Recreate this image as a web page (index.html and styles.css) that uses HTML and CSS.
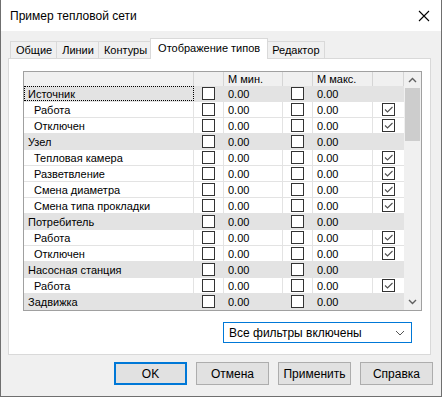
FILE: index.html
```html
<!doctype html>
<html lang="ru">
    <head>
        <meta charset="utf8">
        <link rel="stylesheet" href="styles.css">
    </head>
    <body>
        <div class="window">
            <header class="titlebar">
                <span class="title">Пример тепловой сети</span>
                <svg class="close" width="12" height="12" viewBox="0 0 12 12">
                    <path d="M1 1 L11 11 M11 1 L1 11" stroke="#000" stroke-width="1.1" fill="none"/>
                </svg>
            </header>
            <div class="content">
                <ul class="tabs">
                    <li class="tab">Общие</li>
                    <li class="tab">Линии</li>
                    <li class="tab">Контуры</li>
                    <li class="tab active">Отображение типов</li>
                    <li class="tab">Редактор</li>
                </ul>
                <section class="panel">
                    <div class="grid">
                        <div class="table">
                            <div class="row head">
                                <div class="cell"></div>
                                <div class="cell"></div>
                                <div class="cell num">М мин.</div>
                                <div class="cell"></div>
                                <div class="cell num">М макс.</div>
                                <div class="cell"></div>
                            </div>
                            <div class="row group">
                                <div class="cell name focus">Источник</div>
                                <div class="cell box"><span class="check"></span></div>
                                <div class="cell num">0.00</div>
                                <div class="cell box"><span class="check"></span></div>
                                <div class="cell num">0.00</div>
                                <div class="cell box"></div>
                            </div>
                            <div class="row">
                                <div class="cell name">Работа</div>
                                <div class="cell box"><span class="check"></span></div>
                                <div class="cell num">0.00</div>
                                <div class="cell box"><span class="check"></span></div>
                                <div class="cell num">0.00</div>
                                <div class="cell box"><span class="check on"></span></div>
                            </div>
                            <div class="row">
                                <div class="cell name">Отключен</div>
                                <div class="cell box"><span class="check"></span></div>
                                <div class="cell num">0.00</div>
                                <div class="cell box"><span class="check"></span></div>
                                <div class="cell num">0.00</div>
                                <div class="cell box"><span class="check on"></span></div>
                            </div>
                            <div class="row group">
                                <div class="cell name">Узел</div>
                                <div class="cell box"><span class="check"></span></div>
                                <div class="cell num">0.00</div>
                                <div class="cell box"><span class="check"></span></div>
                                <div class="cell num">0.00</div>
                                <div class="cell box"></div>
                            </div>
                            <div class="row">
                                <div class="cell name">Тепловая камера</div>
                                <div class="cell box"><span class="check"></span></div>
                                <div class="cell num">0.00</div>
                                <div class="cell box"><span class="check"></span></div>
                                <div class="cell num">0.00</div>
                                <div class="cell box"><span class="check on"></span></div>
                            </div>
                            <div class="row">
                                <div class="cell name">Разветвление</div>
                                <div class="cell box"><span class="check"></span></div>
                                <div class="cell num">0.00</div>
                                <div class="cell box"><span class="check"></span></div>
                                <div class="cell num">0.00</div>
                                <div class="cell box"><span class="check on"></span></div>
                            </div>
                            <div class="row">
                                <div class="cell name">Смена диаметра</div>
                                <div class="cell box"><span class="check"></span></div>
                                <div class="cell num">0.00</div>
                                <div class="cell box"><span class="check"></span></div>
                                <div class="cell num">0.00</div>
                                <div class="cell box"><span class="check on"></span></div>
                            </div>
                            <div class="row">
                                <div class="cell name">Смена типа прокладки</div>
                                <div class="cell box"><span class="check"></span></div>
                                <div class="cell num">0.00</div>
                                <div class="cell box"><span class="check"></span></div>
                                <div class="cell num">0.00</div>
                                <div class="cell box"><span class="check on"></span></div>
                            </div>
                            <div class="row group">
                                <div class="cell name">Потребитель</div>
                                <div class="cell box"><span class="check"></span></div>
                                <div class="cell num">0.00</div>
                                <div class="cell box"><span class="check"></span></div>
                                <div class="cell num">0.00</div>
                                <div class="cell box"></div>
                            </div>
                            <div class="row">
                                <div class="cell name">Работа</div>
                                <div class="cell box"><span class="check"></span></div>
                                <div class="cell num">0.00</div>
                                <div class="cell box"><span class="check"></span></div>
                                <div class="cell num">0.00</div>
                                <div class="cell box"><span class="check on"></span></div>
                            </div>
                            <div class="row">
                                <div class="cell name">Отключен</div>
                                <div class="cell box"><span class="check"></span></div>
                                <div class="cell num">0.00</div>
                                <div class="cell box"><span class="check"></span></div>
                                <div class="cell num">0.00</div>
                                <div class="cell box"><span class="check on"></span></div>
                            </div>
                            <div class="row group">
                                <div class="cell name">Насосная станция</div>
                                <div class="cell box"><span class="check"></span></div>
                                <div class="cell num">0.00</div>
                                <div class="cell box"><span class="check"></span></div>
                                <div class="cell num">0.00</div>
                                <div class="cell box"></div>
                            </div>
                            <div class="row">
                                <div class="cell name">Работа</div>
                                <div class="cell box"><span class="check"></span></div>
                                <div class="cell num">0.00</div>
                                <div class="cell box"><span class="check"></span></div>
                                <div class="cell num">0.00</div>
                                <div class="cell box"><span class="check on"></span></div>
                            </div>
                            <div class="row group">
                                <div class="cell name">Задвижка</div>
                                <div class="cell box"><span class="check"></span></div>
                                <div class="cell num">0.00</div>
                                <div class="cell box"><span class="check"></span></div>
                                <div class="cell num">0.00</div>
                                <div class="cell box"></div>
                            </div>
                        </div>
                        <div class="scrollbar">
                            <span class="arrow">
                                <svg width="9" height="6" viewBox="0 0 9 6"><path d="M1 5 L4.5 1.5 L8 5" stroke="#606060" stroke-width="1.4" fill="none"/></svg>
                            </span>
                            <span class="thumb"></span>
                            <span class="track"></span>
                            <span class="arrow">
                                <svg width="9" height="6" viewBox="0 0 9 6"><path d="M1 1 L4.5 4.5 L8 1" stroke="#606060" stroke-width="1.4" fill="none"/></svg>
                            </span>
                        </div>
                    </div>
                    <div class="combo">
                        <span>Все фильтры включены</span>
                        <svg width="10" height="6" viewBox="0 0 10 6"><path d="M1 1 L5 5 L9 1" stroke="#555" stroke-width="1" fill="none"/></svg>
                    </div>
                </section>
                <div class="buttons">
                    <button class="btn default">OK</button>
                    <button class="btn">Отмена</button>
                    <button class="btn">Применить</button>
                    <button class="btn">Справка</button>
                </div>
            </div>
        </div>
    </body>
</html>
```

FILE: styles.css
```css
html, body {
    margin: 0;
    padding: 0;
}
body {
    background: #f0f0f0;
    font-family: "Liberation Sans", Arial, sans-serif;
    height: 397px;
    overflow: hidden;
    width: 442px;
}
.window {
    background: #f0f0f0;
    border: solid #6f6f6f;
    border-width: 0 1px 1px;
    box-sizing: border-box;
    display: flex;
    flex-direction: column;
    height: 397px;
    width: 442px;
}
.titlebar {
    align-items: center;
    background: #fff;
    display: flex;
    height: 31px;
    justify-content: space-between;
    padding: 0 9px 0 9px;
}
.title {
    color: #000;
    font-size: 12px;
}
.close {
    margin-right: 2px;
}
.content {
    display: flex;
    flex-direction: column;
    padding: 7px 8px 0 7px;
}
.tabs {
    align-items: flex-end;
    display: flex;
    height: 21px;
    list-style: none;
    margin: 0;
    padding: 0 0 0 2px;
}
.tab {
    background: #f0f0f0;
    border: 1px solid #d9d9d9;
    border-bottom: none;
    box-sizing: border-box;
    color: #000;
    font-size: 11px;
    height: 18px;
    line-height: 17px;
    margin-left: -1px;
    padding: 0 4px 0 5px;
}
.tab:first-child {
    margin-left: 0;
}
.tab.active {
    background: #fff;
    height: 21px;
    line-height: 19px;
    margin-left: -2px;
    margin-right: -2px;
    padding: 0 7px;
    position: relative;
    z-index: 1;
}
.tab.active + .tab {
    margin-left: 0;
}
.panel {
    background: #fff;
    border: 1px solid #d9d9d9;
    box-sizing: border-box;
    display: flex;
    flex-direction: column;
    height: 297px;
    margin-top: -1px;
    padding: 12px 0 0 14px;
    width: 423px;
}
.grid {
    border: 1px solid #a0a0a0;
    box-sizing: border-box;
    display: flex;
    height: 240px;
    width: 399px;
}
.table {
    display: flex;
    flex: 1;
    flex-direction: column;
}
.row {
    border-bottom: 1px solid #e3e3e3;
    box-sizing: border-box;
    display: grid;
    font-size: 11px;
    grid-template-columns: 170px 30px 59px 30px 60px 31px;
    height: 16px;
}
.row.group {
    background: #e3e3e3;
}
.row.head {
    background: #f0f0f0;
    border-bottom: none;
    height: 14px;
}
.cell {
    align-items: center;
    border-right: 1px solid #e3e3e3;
    box-sizing: border-box;
    color: #000;
    display: flex;
    white-space: nowrap;
}
.cell:last-child {
    border-right: none;
}
.head .cell {
    border-right-color: #d5d5d5;
}
.head .cell:last-child {
    border-right: 1px solid #d5d5d5;
}
.name {
    padding-left: 10px;
}
.group .name {
    padding-left: 4px;
}
.focus {
    outline: 1px dotted #000;
    outline-offset: -1px;
}
.num {
    padding-left: 4px;
}
.box {
    justify-content: center;
}
.check {
    background: #fff;
    border: 1px solid #333;
    box-sizing: border-box;
    height: 13px;
    width: 13px;
}
.check.on {
    background: #fff url("data:image/svg+xml;utf8,<svg xmlns='http://www.w3.org/2000/svg' width='11' height='11'><path d='M2 5.5 L4.5 8 L9.5 3' stroke='%23505050' stroke-width='1.1' fill='none'/></svg>") no-repeat center;
}
.scrollbar {
    background: #f0f0f0;
    display: flex;
    flex-direction: column;
    width: 17px;
}
.arrow {
    align-items: center;
    display: flex;
    height: 16px;
    justify-content: center;
}
.thumb {
    background: #cdcdcd;
    height: 53px;
    margin: 0 1px;
}
.track {
    flex: 1;
}
.combo {
    align-items: center;
    align-self: flex-start;
    border: 1px solid #0078d7;
    box-sizing: border-box;
    display: flex;
    font-size: 12px;
    height: 21px;
    justify-content: space-between;
    margin: 11px 0 0 200px;
    padding: 0 6px 0 5px;
    width: 189px;
}
.buttons {
    display: flex;
    gap: 9px;
    justify-content: flex-end;
    padding-top: 7px;
}
.btn {
    background: #e1e1e1;
    border: 1px solid #adadad;
    box-sizing: border-box;
    color: #000;
    font-family: "Liberation Sans", Arial, sans-serif;
    font-size: 12px;
    font-weight: normal;
    height: 23px;
    padding: 0;
    width: 73px;
}
.btn.default {
    border: 2px solid #0078d7;
}
```
